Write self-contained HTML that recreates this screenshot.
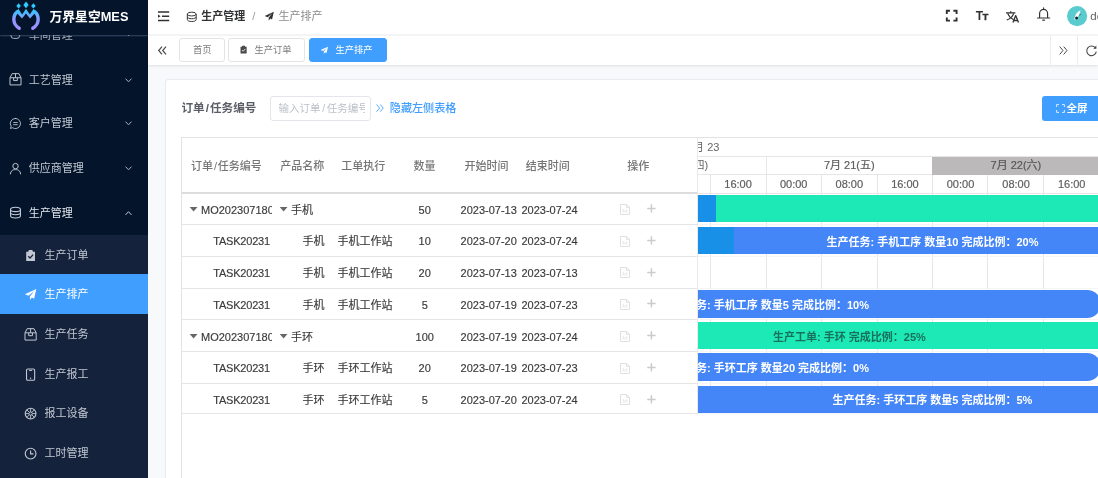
<!DOCTYPE html>
<html lang="zh-CN">
<head>
<meta charset="utf-8">
<title>万界星空MES - 生产排产</title>
<style>
*{box-sizing:border-box;margin:0;padding:0}
html,body{width:1098px;height:478px;overflow:hidden;background:#f7f9fb}
body{position:relative;font-family:"Liberation Sans","Noto Sans CJK SC",sans-serif;font-size:11px;color:#333}
svg{display:block;overflow:visible;position:absolute}
#wrap{position:absolute;left:-10px;top:-10px;width:1118px;height:498px;background:#f7f9fb;will-change:transform}
#root{position:absolute;left:10px;top:10px;width:1098px;height:478px}
.a{position:absolute;white-space:nowrap}
.sl{display:inline-block;padding:0 1.1px}
.sl2{display:inline-block;padding:0 0.9px}
/* sidebar */
#side{position:absolute;left:0;top:0;width:148.3px;height:478px;background:#04142b;overflow:hidden}
#logo{position:absolute;left:0;top:0;width:148.3px;height:35px;background:#04142b;z-index:3;box-shadow:0 1px 1.5px rgba(120,140,170,.45)}
#logo .t{position:absolute;left:49.5px;top:0;height:34px;line-height:33px;font-size:12.8px;font-weight:bold;color:#fff;white-space:nowrap}
.m1{position:absolute;left:0;width:148.3px;height:44.3px;color:#c2c8d3;font-size:11px;line-height:44.3px}
.m1 .tx{position:absolute;left:28.8px;top:0;white-space:nowrap}
.m2{position:absolute;left:0;width:148.3px;height:39.7px;color:#c2c8d3;font-size:11px;line-height:39.5px}
.m2 .tx{position:absolute;left:44.4px;top:1.4px;white-space:nowrap}
#sub{position:absolute;left:0;top:234.5px;width:148.3px;height:244px;background:#14223b}
.m2.on{background:#409eff;color:#fff}
/* header */
#hd{position:absolute;left:148.3px;top:0;width:949.7px;height:35px;background:#fff;border-bottom:1px solid #f6f6f6}
#tabs{position:absolute;left:148.3px;top:35.5px;width:949.7px;height:29.8px;background:#fff;box-shadow:0 1px 3px 0 rgba(0,0,0,.1),0 0 3px 0 rgba(0,0,0,.04)}
.tab{position:absolute;top:38.1px;height:24.2px;border:1px solid #e3e4e6;border-radius:3px;background:#fff;color:#7d7d7d;font-size:9.3px;line-height:22.8px;white-space:nowrap}
.tab.on{background:#409eff;border-color:#409eff;color:#fff}
.tab .tx{position:absolute;top:0}
/* card */
#card{position:absolute;left:164.6px;top:78.8px;width:940px;height:410px;background:#fff;border-radius:3px;border:1px solid #e8ebf0}
/* grid */
#gridbox{position:absolute;left:181px;top:137px;width:930px;height:350px;border:1px solid #e2e2e2;background:#fff}
.hl{position:absolute;height:1px;background:#e6e6e6}
.vl{position:absolute;width:1px;background:#e6e6e6}
.th{position:absolute;top:139px;height:55px;line-height:55px;color:#757575;font-size:11px;font-weight:500;white-space:nowrap}
.td{position:absolute;height:31.7px;line-height:31.7px;padding-top:1.4px;-webkit-text-stroke:0.15px #3a3a3a;color:#3a3a3a;font-size:11px;white-space:nowrap}
.c{transform:translateX(-50%)}
.bar{position:absolute;height:27.4px;overflow:hidden;color:#fff;font-size:11px;font-weight:bold;line-height:30px;white-space:nowrap}
.bar.pill{height:28px;margin-top:-0.5px;line-height:31px;border-radius:0 14px 14px 0}
.bar.g{background:#1de9b6;color:#17705c}
.bar.b{background:#4486f7}
.bar .p{position:absolute;left:0;top:0;height:100%;background:#1890e8}
.gl{background:#f5f5f5 !important}
.sc{position:absolute;color:#5e5e5e;font-size:11px;-webkit-text-stroke:0.2px #5e5e5e;white-space:nowrap;transform:translateX(-50%)}
</style>
</head>
<body>
<div id="wrap"><div id="root">
<div id="side">
<div class="m1" style="top:12.7px;color:#aab1bd"><span class="tx">车间管理</span><svg style="left:9.5px;top:15.5px" width="12" height="12" viewBox="0 0 12 12" ><rect x="1" y="2" width="8.6" height="8.4" rx="2.6" fill="none" stroke="#aab1bd" stroke-width="1"/></svg><svg style="left:124.5px;top:19px" width="7" height="4.5" viewBox="0 0 7 4.5" ><path d="M0.5 0.5 L3.5 3.7 L6.5 0.5" fill="none" stroke="#8f98a8" stroke-width="1"/></svg></div>
<div class="m1" style="top:57.6px"><span class="tx">工艺管理</span><svg style="left:8.8px;top:15.6px" width="13" height="13" viewBox="0 0 12 12" ><path d="M0.9 4.4 L2.9 0.6 H9.1 L11.1 4.4 V11 H0.9 Z M0.9 4.4 H11.1 M6 0.6 V4.4 M4.3 4.4 V7 H7.7 V4.4" fill="none" stroke="#c2c8d3" stroke-width="0.9" stroke-linejoin="round"/></svg><svg style="left:124.6px;top:20px" width="7" height="4.5" viewBox="0 0 7 4.5" ><path d="M0.5 0.6 L3.5 3.8 L6.5 0.6" fill="none" stroke="#aab2c0" stroke-width="1"/></svg></div>
<div class="m1" style="top:101.4px"><span class="tx">客户管理</span><svg style="left:8.8px;top:15.6px" width="13" height="13" viewBox="0 0 12 12" ><path d="M6 1.3 A4.7 4.7 0 1 1 3.3 9.9 L1.3 10.6 L2 8.6 A4.7 4.7 0 0 1 6 1.3 Z M4.3 5.1 H7.7 M4.3 7.1 H7.7" fill="none" stroke="#c2c8d3" stroke-width="0.8" stroke-linejoin="round" stroke-linecap="round"/></svg><svg style="left:124.6px;top:20px" width="7" height="4.5" viewBox="0 0 7 4.5" ><path d="M0.5 0.6 L3.5 3.8 L6.5 0.6" fill="none" stroke="#aab2c0" stroke-width="1"/></svg></div>
<div class="m1" style="top:146.3px"><span class="tx">供应商管理</span><svg style="left:8.8px;top:15.6px" width="13" height="13" viewBox="0 0 12 12" ><circle cx="6" cy="3.8" r="2.5" fill="none" stroke="#c2c8d3" stroke-width="0.9"/><path d="M1.3 11 C1.6 8 3.6 7 6 7 S10.4 8 10.7 11" fill="none" stroke="#c2c8d3" stroke-width="0.9" stroke-linecap="round"/></svg><svg style="left:124.6px;top:20px" width="7" height="4.5" viewBox="0 0 7 4.5" ><path d="M0.5 0.6 L3.5 3.8 L6.5 0.6" fill="none" stroke="#aab2c0" stroke-width="1"/></svg></div>
<div class="m1" style="top:190.7px;color:#e2e6ec"><span class="tx">生产管理</span><svg style="left:8.8px;top:15.6px" width="13" height="13" viewBox="0 0 12 12" ><ellipse cx="6" cy="3.2" rx="4.6" ry="2" fill="none" stroke="#c2c8d3" stroke-width="1"/><path d="M1.4 3.2 V9 C1.4 10.1 3.4 11 6 11 S10.6 10.1 10.6 9 V3.2 M1.4 6.1 C1.4 7.2 3.4 8.1 6 8.1 S10.6 7.2 10.6 6.1" fill="none" stroke="#c2c8d3" stroke-width="1"/></svg><svg style="left:124.6px;top:20px" width="7" height="4.5" viewBox="0 0 7 4.5" ><path d="M0.5 3.9 L3.5 0.7 L6.5 3.9" fill="none" stroke="#c3c9d4" stroke-width="1"/></svg></div>
<div id="sub">
<div class="m2" style="top:0.0px"><span class="tx">生产订单</span><svg style="left:24.3px;top:14.4px" width="13.2" height="13.2" viewBox="0 0 12 12" ><path d="M2 2.4 H4 V1.4 H8 V2.4 H10 V11 H2 Z" fill="#c2c8d3"/><path d="M3.9 6.6 L5.5 8.2 L8.3 5.1" fill="none" stroke="#14223b" stroke-width="1.1"/><rect x="4.6" y="0.9" width="2.8" height="1.6" fill="#c2c8d3"/></svg></div>
<div class="m2 on" style="top:39.6px"><span class="tx">生产排产</span><svg style="left:24.3px;top:14.4px" width="13.2" height="13.2" viewBox="0 0 12 12" ><path d="M11.2 0.9 L0.8 5.6 L4.2 7 L9.3 2.7 L5.4 7.7 L5.4 11 L7.2 8.7 L9.2 9.8 Z" fill="#fff"/></svg></div>
<div class="m2" style="top:79.2px"><span class="tx">生产任务</span><svg style="left:24.3px;top:14.4px" width="13.2" height="13.2" viewBox="0 0 12 12" ><path d="M0.9 4.4 L2.9 0.6 H9.1 L11.1 4.4 V11 H0.9 Z M0.9 4.4 H11.1 M6 0.6 V4.4 M4.3 4.4 V7 H7.7 V4.4" fill="none" stroke="#c2c8d3" stroke-width="0.9" stroke-linejoin="round"/></svg></div>
<div class="m2" style="top:118.8px"><span class="tx">生产报工</span><svg style="left:24.3px;top:14.4px" width="13.2" height="13.2" viewBox="0 0 12 12" ><rect x="2.3" y="0.9" width="7.4" height="10.2" rx="1.2" fill="none" stroke="#c2c8d3" stroke-width="1"/><path d="M4.6 2.2 H7.4" stroke="#c2c8d3" stroke-width="0.9"/><circle cx="6" cy="9.3" r="0.6" fill="#c2c8d3"/></svg></div>
<div class="m2" style="top:158.4px"><span class="tx">报工设备</span><svg style="left:24.3px;top:14.4px" width="13.2" height="13.2" viewBox="0 0 12 12" ><circle cx="6" cy="6" r="4.9" fill="none" stroke="#c2c8d3" stroke-width="1"/><circle cx="6" cy="6" r="1.5" fill="none" stroke="#c2c8d3" stroke-width="0.9"/><path d="M6 1.2 V4.5 M6 7.5 V10.8 M1.2 6 H4.5 M7.5 6 H10.8 M2.6 2.6 L4.9 4.9 M7.1 7.1 L9.4 9.4 M9.4 2.6 L7.1 4.9 M4.9 7.1 L2.6 9.4" stroke="#c2c8d3" stroke-width="0.8"/></svg></div>
<div class="m2" style="top:198.0px"><span class="tx">工时管理</span><svg style="left:24.3px;top:14.4px" width="13.2" height="13.2" viewBox="0 0 12 12" ><circle cx="6" cy="6" r="4.9" fill="none" stroke="#c2c8d3" stroke-width="1"/><path d="M6 3.2 V6.3 H8.6" fill="none" stroke="#c2c8d3" stroke-width="1"/></svg></div>
</div>
<div id="logo"><svg style="left:10.8px;top:0px" width="30" height="32" viewBox="0 0 30 32" ><defs><linearGradient id="lg" gradientUnits="userSpaceOnUse" x1="0" y1="8.5" x2="0" y2="30"><stop offset="0" stop-color="#2ecbff"/><stop offset="0.22" stop-color="#4bb8ff"/><stop offset="0.45" stop-color="#8a9bff"/><stop offset="1" stop-color="#a28eff"/></linearGradient></defs><path d="M6.2 11.8 C1.6 16 1.2 24 8.2 28.3" fill="none" stroke="url(#lg)" stroke-width="3.4" stroke-linecap="round"/><path d="M23.8 11.8 C28.4 16 28.8 24 21.8 28.3" fill="none" stroke="url(#lg)" stroke-width="3.4" stroke-linecap="round"/><path d="M4.9 12 L7.3 8.8 L11.2 14.4 L15 8.8 L18.8 14.4 L22.7 8.8 L25.1 12 L19 18.6 L15 13.4 L11 18.6 Z" fill="url(#lg)"/><path d="M7.6 3.3 L9.9 5.9 L7.6 8.5 L5.3 5.9 Z M15 1.6 L17.7 4.9 L15 8.2 L12.3 4.9 Z M22.4 3.3 L24.7 5.9 L22.4 8.5 L20.1 5.9 Z" fill="#2ecbff"/></svg><span class="t">万界星空MES</span></div>
</div>
<div id="hd"></div>
<svg style="left:158px;top:10.8px" width="11.2" height="10.4" viewBox="0 0 11.2 10.4" ><path d="M0 1 H11.2 M4 5.2 H11.2 M0 9.4 H11.2" stroke="#303133" stroke-width="1.5"/><path d="M0 3.6 L2.6 5.2 L0 6.8 Z" fill="#303133"/></svg>
<svg style="left:186.3px;top:10.5px" width="11.5" height="11.5" viewBox="0 0 12 12" ><ellipse cx="6" cy="3.2" rx="4.6" ry="2" fill="none" stroke="#303133" stroke-width="1"/><path d="M1.4 3.2 V9 C1.4 10.1 3.4 11 6 11 S10.6 10.1 10.6 9 V3.2 M1.4 6.1 C1.4 7.2 3.4 8.1 6 8.1 S10.6 7.2 10.6 6.1" fill="none" stroke="#303133" stroke-width="1"/></svg>
<div class="a" style="left:201.2px;top:0;height:33px;line-height:32.4px;font-size:11px;font-weight:bold;color:#303133">生产管理</div>
<div class="a" style="left:252.3px;top:0;height:33px;line-height:32.4px;font-size:11px;color:#9c9c9c">/</div>
<svg style="left:264px;top:11px" width="10.5" height="10.5" viewBox="0 0 12 12" ><path d="M11.2 0.9 L0.8 5.6 L4.2 7 L9.3 2.7 L5.4 7.7 L5.4 11 L7.2 8.7 L9.2 9.8 Z" fill="#303133"/></svg>
<div class="a" style="left:278.6px;top:0;height:33px;line-height:32.4px;font-size:11px;color:#8c8c8c">生产排产</div>
<svg style="left:945.5px;top:10.4px" width="11.4" height="11.4" viewBox="0 0 11.4 11.4" ><path d="M0.8 4 V0.8 H4 M7.4 0.8 H10.6 V4 M10.6 7.4 V10.6 H7.4 M4 10.6 H0.8 V7.4" fill="none" stroke="#303133" stroke-width="1.9"/></svg>
<div class="a" style="left:975.8px;top:9.4px;font-size:12px;line-height:15px;font-weight:bold;color:#303133;letter-spacing:-0.7px">T<span style="font-size:9.6px;-webkit-text-stroke:0.3px #303133">T</span></div>
<svg style="left:1006.4px;top:10.8px" width="12.8" height="11.8" viewBox="0 0 12.8 11.8" ><path d="M0 1.9 H9.4 M4.7 0.2 V1.9 M1.8 2.6 C2.6 5 4.8 7.2 7.6 8.8 M7.6 2.6 C6.8 5.2 4.4 7.6 0.8 9" fill="none" stroke="#303133" stroke-width="1.2"/><path d="M6.9 11.6 L9.7 4.6 L12.5 11.6 M7.8 9.5 H11.6" fill="none" stroke="#303133" stroke-width="1.3" stroke-linejoin="round"/></svg>
<svg style="left:1037px;top:7.2px" width="13.2" height="14.6" viewBox="0 0 13.2 14.6" ><path d="M6.6 0.9 V2 M2.6 10.8 V6.6 A4 4.3 0 0 1 10.6 6.6 V10.8 M0.5 11 H12.7 M5.8 13.2 H7.4" fill="none" stroke="#303133" stroke-width="1.15" stroke-linecap="round"/></svg>
<svg style="left:1066.6px;top:5.9px" width="20.2" height="20.2" viewBox="0 0 20.2 20.2" ><circle cx="10.1" cy="10.1" r="10.1" fill="#5accd0"/><path d="M13.6 4.4 C10 5.6 7.6 9 7.4 14 C10 12.2 12.6 9.2 13.6 4.4 Z" fill="#fff"/><circle cx="9.6" cy="12" r="1.5" fill="#1c1c1c"/><path d="M12.2 9.2 L14.2 8.4" stroke="#444" stroke-width="0.7"/></svg>
<div class="a" style="left:1090.3px;top:0;height:33px;line-height:32.4px;font-size:11.5px;color:#606266">demo</div>
<div id="tabs"></div>
<svg style="left:158px;top:45.8px" width="8.7" height="9" viewBox="0 0 8.7 9" ><path d="M4 0.6 L0.7 4.5 L4 8.4 M8 0.6 L4.7 4.5 L8 8.4" fill="none" stroke="#4a4a4a" stroke-width="1.2"/></svg>
<div class="tab" style="left:179px;width:45.7px"><span class="tx" style="left:12.9px">首页</span></div>
<div class="tab" style="left:227.6px;width:77.8px"><span class="tx" style="left:25.8px">生产订单</span><svg style="left:10.6px;top:6.4px" width="9.2" height="9.2" viewBox="0 0 12 12" ><path d="M2 2.4 H4 V1.4 H8 V2.4 H10 V11 H2 Z" fill="#4a4a4a"/><path d="M3.9 6.6 L5.5 8.2 L8.3 5.1" fill="none" stroke="#fff" stroke-width="1.1"/><rect x="4.6" y="0.9" width="2.8" height="1.6" fill="#4a4a4a"/></svg></div>
<div class="tab on" style="left:309px;width:77.9px"><span class="tx" style="left:25.4px">生产排产</span><svg style="left:10px;top:6.8px" width="8.6" height="8.6" viewBox="0 0 12 12" ><path d="M11.2 0.9 L0.8 5.6 L4.2 7 L9.3 2.7 L5.4 7.7 L5.4 11 L7.2 8.7 L9.2 9.8 Z" fill="#fff"/></svg></div>
<div class="vl" style="left:1049.5px;top:36px;height:29.5px;background:#ececec"></div>
<div class="vl" style="left:1076.8px;top:36px;height:29.5px;background:#ececec"></div>
<svg style="left:1059.3px;top:45.8px" width="8.7" height="9" viewBox="0 0 8.7 9" ><path d="M0.7 0.6 L4 4.5 L0.7 8.4 M4.7 0.6 L8 4.5 L4.7 8.4" fill="none" stroke="#4a4a4a" stroke-width="1"/></svg>
<svg style="left:1086px;top:44.8px" width="11" height="11" viewBox="0 0 11 11" ><path d="M9.6 3.2 A4.8 4.8 0 1 0 10.3 6.6" fill="none" stroke="#4a4a4a" stroke-width="1.1"/><path d="M10.4 0.6 V3.8 H7.2 Z" fill="#4a4a4a"/></svg>
<div id="card"></div>
<div class="a" style="left:181.4px;top:96px;height:25px;line-height:24.6px;font-size:11.6px;font-weight:bold;color:#5a5e66">订单<span class="sl">/</span>任务编号</div>
<div class="a" style="left:269.7px;top:96px;width:101.8px;height:25.4px;border:1px solid #e3e6ea;border-radius:3px;background:#fff;overflow:hidden"><span class="a" style="left:7.8px;top:0;width:86.4px;overflow:hidden;line-height:23.6px;font-size:10.5px;color:#bcc0c8">输入订单<span class="sl" style="padding:0 1.7px">/</span>任务编号</span></div>
<svg style="left:376px;top:104.4px" width="7.8" height="8.2" viewBox="0 0 7.8 8.2" ><path d="M0.6 0.5 L3.6 4.1 L0.6 7.7 M4.2 0.5 L7.2 4.1 L4.2 7.7" fill="none" stroke="#409eff" stroke-width="0.9"/></svg>
<div class="a" style="left:389.8px;top:96px;height:25px;line-height:24.6px;font-size:11.1px;font-weight:500;color:#409eff">隐藏左侧表格</div>
<div class="a" style="left:1042px;top:95.7px;width:70px;height:25.8px;border-radius:3px;background:#409eff"></div>
<svg style="left:1055.6px;top:104.2px" width="9" height="9" viewBox="0 0 9 9" ><path d="M0.6 3 V0.6 H3 M6 0.6 H8.4 V3 M8.4 6 V8.4 H6 M3 8.4 H0.6 V6" fill="none" stroke="#fff" stroke-width="0.9" opacity="0.9"/></svg>
<div class="a" style="left:1066.4px;top:96px;height:25px;line-height:24.6px;font-size:10.6px;font-weight:bold;color:#fff">全屏</div>
<div id="gridbox"></div>
<div class="hl" style="left:182px;top:192px;width:515.6px;height:2px;background:#dcdcdc"></div>
<div class="th" style="left:191px">订单<span class="sl2">/</span>任务编号</div>
<div class="th" style="left:280.2px">产品名称</div>
<div class="th c" style="left:363.3px">工单执行</div>
<div class="th c" style="left:424.6px">数量</div>
<div class="th c" style="left:486.4px">开始时间</div>
<div class="th c" style="left:547.8px">结束时间</div>
<div class="th c" style="left:638.2px">操作</div>
<div class="hl" style="left:182px;top:224.2px;width:515.6px"></div>
<svg style="left:190px;top:207.0px" width="7.2" height="4.2" viewBox="0 0 7.2 4.2" ><path d="M-0.3 0 H7.5 L3.6 4.5 Z" fill="#666"/></svg>
<div class="td" style="left:201px;top:193.4px;width:70.6px;overflow:hidden">MO202307180</div>
<svg style="left:279.6px;top:207.0px" width="7.2" height="4.2" viewBox="0 0 7.2 4.2" ><path d="M-0.3 0 H7.5 L3.6 4.5 Z" fill="#666"/></svg>
<div class="td" style="left:291px;top:193.4px">手机</div>
<div class="td c" style="left:424.7px;top:193.4px">50</div>
<div class="td c" style="left:488.7px;top:193.4px">2023-07-13</div>
<div class="td c" style="left:549.6px;top:193.4px">2023-07-24</div>
<svg style="left:619.8px;top:204.0px" width="10" height="11" viewBox="0 0 10 11" ><path d="M0.5 0.5 H6.6 L9.5 3.4 V10.5 H0.5 Z M6.6 0.5 V3.4 H9.5" fill="none" stroke="#dcdcdc" stroke-width="0.9"/><path d="M3.2 5 V8.6 M5 6 V8.6 M6.8 5.5 V8.6" stroke="#e3e3e3" stroke-width="0.9"/></svg>
<svg style="left:647px;top:204.2px" width="8.8" height="8.8" viewBox="0 0 8.8 8.8" ><path d="M4.4 0.2 V8.6 M0.2 4.4 H8.6" stroke="#cbcbcb" stroke-width="1.5"/></svg>
<div class="hl" style="left:182px;top:255.9px;width:515.6px"></div>
<div class="td" style="left:213.2px;top:225.1px;width:58.4px;overflow:hidden;letter-spacing:-0.2px">TASK20231</div>
<div class="td" style="left:302.6px;top:225.1px">手机</div>
<div class="td c" style="left:365px;top:225.1px">手机工作站</div>
<div class="td c" style="left:424.7px;top:225.1px">10</div>
<div class="td c" style="left:488.7px;top:225.1px">2023-07-20</div>
<div class="td c" style="left:549.6px;top:225.1px">2023-07-24</div>
<svg style="left:619.8px;top:235.7px" width="10" height="11" viewBox="0 0 10 11" ><path d="M0.5 0.5 H6.6 L9.5 3.4 V10.5 H0.5 Z M6.6 0.5 V3.4 H9.5" fill="none" stroke="#dcdcdc" stroke-width="0.9"/><path d="M3.2 5 V8.6 M5 6 V8.6 M6.8 5.5 V8.6" stroke="#e3e3e3" stroke-width="0.9"/></svg>
<svg style="left:647px;top:235.9px" width="8.8" height="8.8" viewBox="0 0 8.8 8.8" ><path d="M4.4 0.2 V8.6 M0.2 4.4 H8.6" stroke="#cbcbcb" stroke-width="1.5"/></svg>
<div class="hl" style="left:182px;top:287.7px;width:515.6px"></div>
<div class="td" style="left:213.2px;top:256.8px;width:58.4px;overflow:hidden;letter-spacing:-0.2px">TASK20231</div>
<div class="td" style="left:302.6px;top:256.8px">手机</div>
<div class="td c" style="left:365px;top:256.8px">手机工作站</div>
<div class="td c" style="left:424.7px;top:256.8px">20</div>
<div class="td c" style="left:488.7px;top:256.8px">2023-07-13</div>
<div class="td c" style="left:549.6px;top:256.8px">2023-07-13</div>
<svg style="left:619.8px;top:267.4px" width="10" height="11" viewBox="0 0 10 11" ><path d="M0.5 0.5 H6.6 L9.5 3.4 V10.5 H0.5 Z M6.6 0.5 V3.4 H9.5" fill="none" stroke="#dcdcdc" stroke-width="0.9"/><path d="M3.2 5 V8.6 M5 6 V8.6 M6.8 5.5 V8.6" stroke="#e3e3e3" stroke-width="0.9"/></svg>
<svg style="left:647px;top:267.6px" width="8.8" height="8.8" viewBox="0 0 8.8 8.8" ><path d="M4.4 0.2 V8.6 M0.2 4.4 H8.6" stroke="#cbcbcb" stroke-width="1.5"/></svg>
<div class="hl" style="left:182px;top:319.4px;width:515.6px"></div>
<div class="td" style="left:213.2px;top:288.6px;width:58.4px;overflow:hidden;letter-spacing:-0.2px">TASK20231</div>
<div class="td" style="left:302.6px;top:288.6px">手机</div>
<div class="td c" style="left:365px;top:288.6px">手机工作站</div>
<div class="td c" style="left:424.7px;top:288.6px">5</div>
<div class="td c" style="left:488.7px;top:288.6px">2023-07-19</div>
<div class="td c" style="left:549.6px;top:288.6px">2023-07-23</div>
<svg style="left:619.8px;top:299.2px" width="10" height="11" viewBox="0 0 10 11" ><path d="M0.5 0.5 H6.6 L9.5 3.4 V10.5 H0.5 Z M6.6 0.5 V3.4 H9.5" fill="none" stroke="#dcdcdc" stroke-width="0.9"/><path d="M3.2 5 V8.6 M5 6 V8.6 M6.8 5.5 V8.6" stroke="#e3e3e3" stroke-width="0.9"/></svg>
<svg style="left:647px;top:299.4px" width="8.8" height="8.8" viewBox="0 0 8.8 8.8" ><path d="M4.4 0.2 V8.6 M0.2 4.4 H8.6" stroke="#cbcbcb" stroke-width="1.5"/></svg>
<div class="hl" style="left:182px;top:351.1px;width:515.6px"></div>
<svg style="left:190px;top:333.9px" width="7.2" height="4.2" viewBox="0 0 7.2 4.2" ><path d="M-0.3 0 H7.5 L3.6 4.5 Z" fill="#666"/></svg>
<div class="td" style="left:201px;top:320.3px;width:70.6px;overflow:hidden">MO202307180</div>
<svg style="left:279.6px;top:333.9px" width="7.2" height="4.2" viewBox="0 0 7.2 4.2" ><path d="M-0.3 0 H7.5 L3.6 4.5 Z" fill="#666"/></svg>
<div class="td" style="left:291px;top:320.3px">手环</div>
<div class="td c" style="left:424.7px;top:320.3px">100</div>
<div class="td c" style="left:488.7px;top:320.3px">2023-07-19</div>
<div class="td c" style="left:549.6px;top:320.3px">2023-07-24</div>
<svg style="left:619.8px;top:330.9px" width="10" height="11" viewBox="0 0 10 11" ><path d="M0.5 0.5 H6.6 L9.5 3.4 V10.5 H0.5 Z M6.6 0.5 V3.4 H9.5" fill="none" stroke="#dcdcdc" stroke-width="0.9"/><path d="M3.2 5 V8.6 M5 6 V8.6 M6.8 5.5 V8.6" stroke="#e3e3e3" stroke-width="0.9"/></svg>
<svg style="left:647px;top:331.1px" width="8.8" height="8.8" viewBox="0 0 8.8 8.8" ><path d="M4.4 0.2 V8.6 M0.2 4.4 H8.6" stroke="#cbcbcb" stroke-width="1.5"/></svg>
<div class="hl" style="left:182px;top:382.8px;width:515.6px"></div>
<div class="td" style="left:213.2px;top:352.0px;width:58.4px;overflow:hidden;letter-spacing:-0.2px">TASK20231</div>
<div class="td" style="left:302.6px;top:352.0px">手环</div>
<div class="td c" style="left:365px;top:352.0px">手环工作站</div>
<div class="td c" style="left:424.7px;top:352.0px">20</div>
<div class="td c" style="left:488.7px;top:352.0px">2023-07-19</div>
<div class="td c" style="left:549.6px;top:352.0px">2023-07-23</div>
<svg style="left:619.8px;top:362.6px" width="10" height="11" viewBox="0 0 10 11" ><path d="M0.5 0.5 H6.6 L9.5 3.4 V10.5 H0.5 Z M6.6 0.5 V3.4 H9.5" fill="none" stroke="#dcdcdc" stroke-width="0.9"/><path d="M3.2 5 V8.6 M5 6 V8.6 M6.8 5.5 V8.6" stroke="#e3e3e3" stroke-width="0.9"/></svg>
<svg style="left:647px;top:362.8px" width="8.8" height="8.8" viewBox="0 0 8.8 8.8" ><path d="M4.4 0.2 V8.6 M0.2 4.4 H8.6" stroke="#cbcbcb" stroke-width="1.5"/></svg>
<div class="hl" style="left:182px;top:413.4px;width:515.6px"></div>
<div class="td" style="left:213.2px;top:383.7px;width:58.4px;overflow:hidden;letter-spacing:-0.2px">TASK20231</div>
<div class="td" style="left:302.6px;top:383.7px">手环</div>
<div class="td c" style="left:365px;top:383.7px">手环工作站</div>
<div class="td c" style="left:424.7px;top:383.7px">5</div>
<div class="td c" style="left:488.7px;top:383.7px">2023-07-20</div>
<div class="td c" style="left:549.6px;top:383.7px">2023-07-24</div>
<svg style="left:619.8px;top:394.3px" width="10" height="11" viewBox="0 0 10 11" ><path d="M0.5 0.5 H6.6 L9.5 3.4 V10.5 H0.5 Z M6.6 0.5 V3.4 H9.5" fill="none" stroke="#dcdcdc" stroke-width="0.9"/><path d="M3.2 5 V8.6 M5 6 V8.6 M6.8 5.5 V8.6" stroke="#e3e3e3" stroke-width="0.9"/></svg>
<svg style="left:647px;top:394.5px" width="8.8" height="8.8" viewBox="0 0 8.8 8.8" ><path d="M4.4 0.2 V8.6 M0.2 4.4 H8.6" stroke="#cbcbcb" stroke-width="1.5"/></svg>
<div class="vl" style="left:696.9px;top:138px;height:277px;background:#e9e9e9"></div>
<div class="a" style="left:697.6px;top:138px;width:401px;height:340px;background:#fff;overflow:hidden" id="gantt">
<div class="hl" style="left:0;top:18.3px;width:401px"></div>
<div class="hl" style="left:0;top:36.2px;width:401px"></div>
<div class="hl" style="left:0;top:54.8px;width:401px"></div>
<div class="vl" style="left:12.7px;top:36.6px;height:239.6px"></div>
<div class="vl" style="left:68.1px;top:18.8px;height:257.4px"></div>
<div class="vl" style="left:123.6px;top:36.6px;height:239.6px"></div>
<div class="vl" style="left:179.0px;top:36.6px;height:239.6px"></div>
<div class="vl" style="left:234.5px;top:18.8px;height:257.4px"></div>
<div class="vl" style="left:289.9px;top:36.6px;height:239.6px"></div>
<div class="vl" style="left:345.4px;top:36.6px;height:239.6px"></div>
<div class="vl" style="left:400.9px;top:36.6px;height:239.6px"></div>
<div class="hl gl" style="left:0;top:86.2px;width:401px"></div>
<div class="hl gl" style="left:0;top:117.9px;width:401px"></div>
<div class="hl gl" style="left:0;top:149.7px;width:401px"></div>
<div class="hl gl" style="left:0;top:181.4px;width:401px"></div>
<div class="hl gl" style="left:0;top:213.1px;width:401px"></div>
<div class="hl gl" style="left:0;top:244.8px;width:401px"></div>
<div class="hl gl" style="left:0;top:275.4px;width:401px"></div>
<div class="a" style="left:234.6px;top:18.7px;width:170px;height:18px;background:#bcb9ba"></div>
<div class="a" style="left:-4.5px;top:0px;height:18.6px;line-height:18.6px;font-size:11px;color:#666">月 23</div>
<div class="a" style="left:-4.0px;top:19px;height:17.6px;line-height:17.6px;font-size:11px;color:#666">四)</div>
<div class="sc" style="left:151.7px;top:19px;height:17.6px;line-height:17.6px">7月 21(五)</div>
<div class="sc" style="left:318.3px;top:19px;height:17.6px;line-height:17.6px;color:#555">7月 22(六)</div>
<div class="sc" style="left:40.5px;top:37px;height:18.4px;line-height:18.4px">16:00</div>
<div class="sc" style="left:96.1px;top:37px;height:18.4px;line-height:18.4px">00:00</div>
<div class="sc" style="left:151.7px;top:37px;height:18.4px;line-height:18.4px">08:00</div>
<div class="sc" style="left:207.3px;top:37px;height:18.4px;line-height:18.4px">16:00</div>
<div class="sc" style="left:262.9px;top:37px;height:18.4px;line-height:18.4px">00:00</div>
<div class="sc" style="left:318.5px;top:37px;height:18.4px;line-height:18.4px">08:00</div>
<div class="sc" style="left:374.1px;top:37px;height:18.4px;line-height:18.4px">16:00</div>
<div class="bar g" style="left:0.0px;top:57.1px;width:412.4px"><div class="p" style="width:18.4px"></div></div>
<div class="bar b" style="left:0.0px;top:88.8px;width:412.4px"><div class="p" style="width:36.0px"></div><span class="a c" style="left:234.9px;top:0">生产任务: 手机工序 数量10 完成比例：20%</span></div>
<div class="bar b pill" style="left:-200.0px;top:152.3px;width:603.4px"><span class="a c" style="left:268.4px;top:0">生产任务: 手机工序 数量5 完成比例：10%</span></div>
<div class="bar g" style="left:0.0px;top:184.0px;width:412.4px"><span class="a c" style="left:151.9px;top:0">生产工单: 手环 完成比例：25%</span></div>
<div class="bar b pill" style="left:-200.0px;top:215.3px;width:603.9px"><span class="a c" style="left:268.4px;top:0">生产任务: 手环工序 数量20 完成比例：0%</span></div>
<div class="bar b" style="left:0.0px;top:247.8px;width:412.4px;height:27.3px;line-height:29.900000000000002px"><span class="a c" style="left:234.9px;top:0">生产任务: 手环工序 数量5 完成比例：5%</span></div>
</div>
</div></div>
</body>
</html>
